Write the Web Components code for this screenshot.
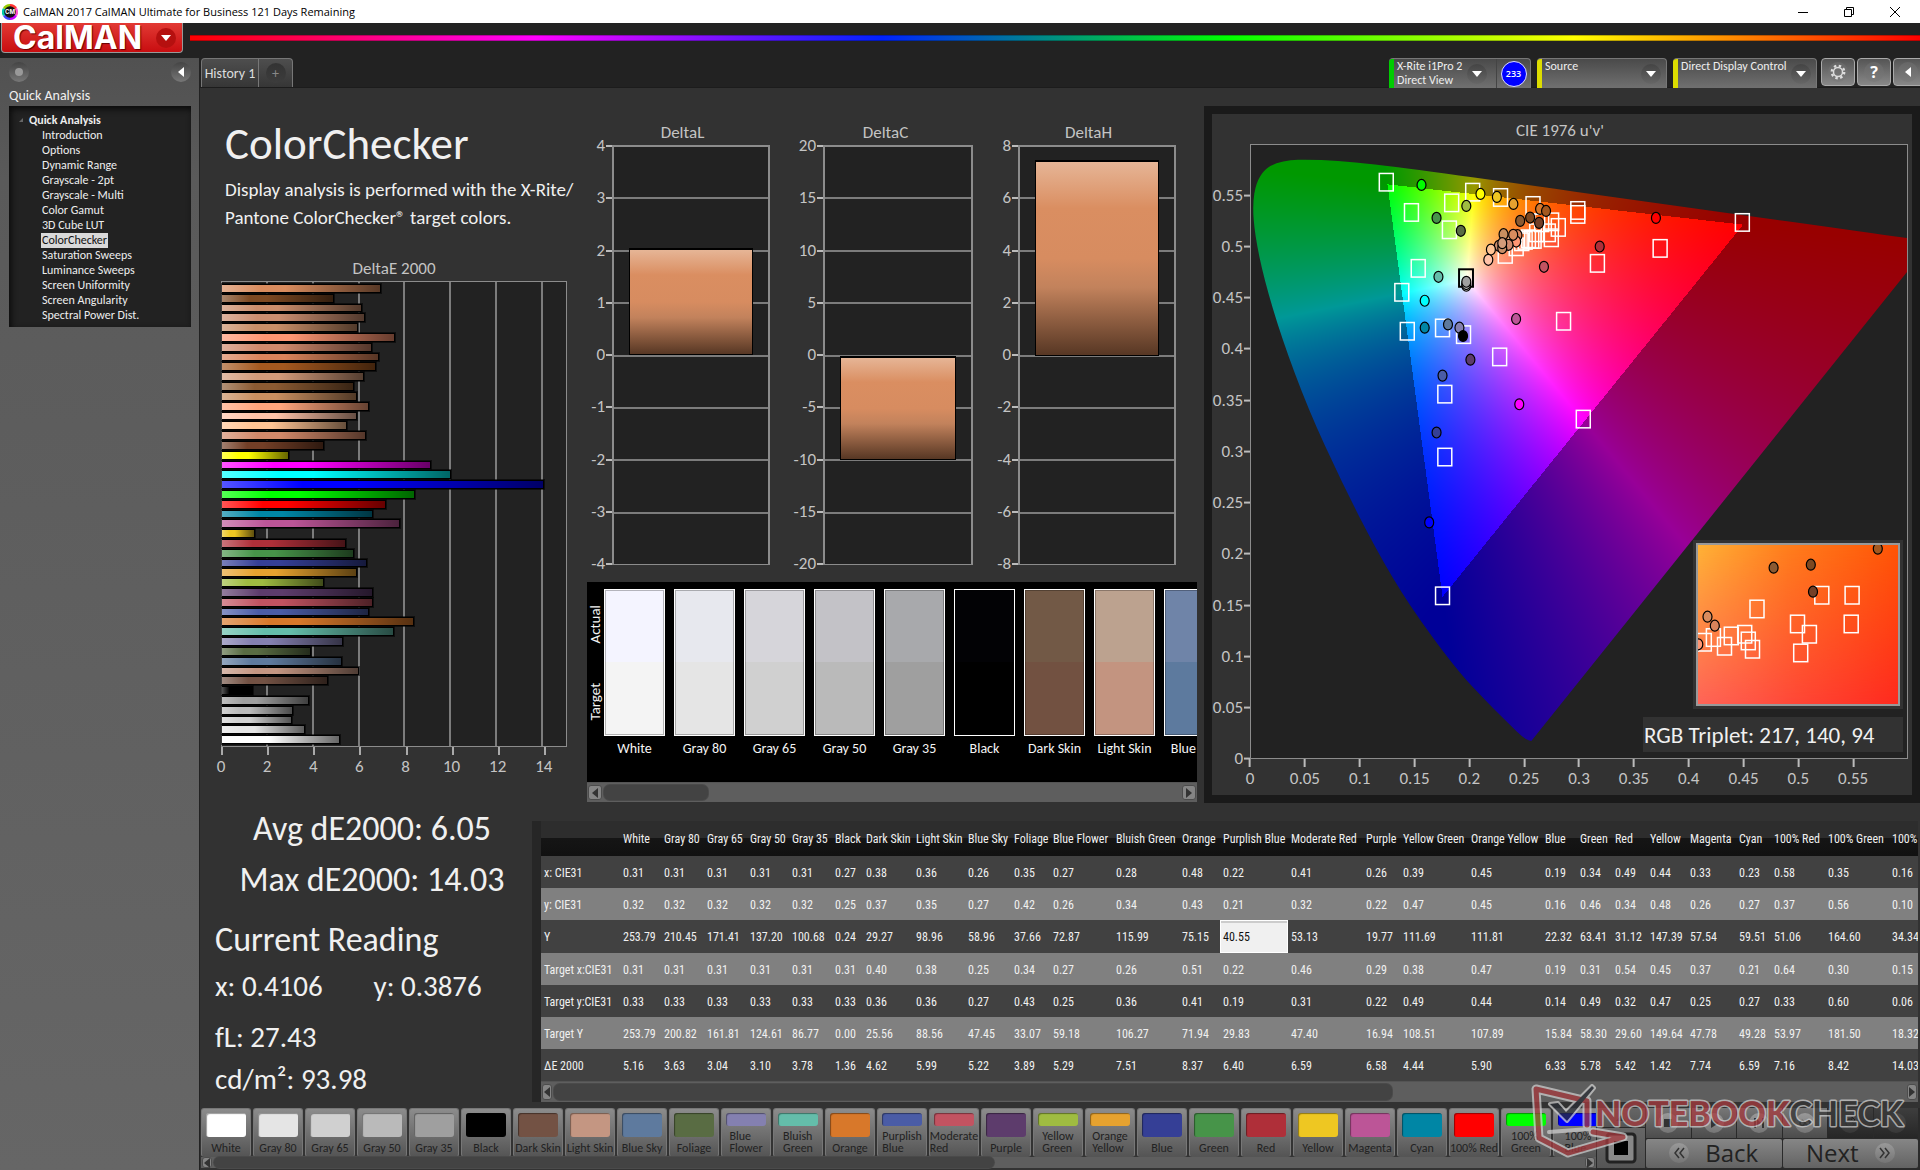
<!DOCTYPE html>
<html lang="en">
<head>
<meta charset="utf-8">
<title>CalMAN 2017 CalMAN Ultimate for Business 121 Days Remaining</title>
<style>
html,body{margin:0;height:100%}
body{background:#323232;color:#e6e6e6;font-family:Carlito,Lato,"Open Sans",sans-serif;overflow:hidden}
</style>
</head>
<body>
<cal-app></cal-app>
<script>
const RESET = `*{box-sizing:border-box}button{font:inherit;color:inherit;border:0;padding:0;margin:0;background:none;cursor:pointer}h1,h2,h3,p,ul,ol,dl,dd,figure{margin:0;padding:0}ul{list-style:none}a{color:inherit;text-decoration:none}svg{display:block}`;

function define(name, css, html, setup) {
  customElements.define(name, class extends HTMLElement {
    connectedCallback() {
      if (this.shadowRoot) return;
      const root = this.attachShadow({ mode: 'open' });
      const tpl = document.createElement('template');
      tpl.innerHTML = `<style>${RESET}${css}</style>${typeof html === 'function' ? html(this) : html}`;
      root.append(tpl.content.cloneNode(true));
      if (setup) setup(this, root);
    }
  });
}

/* ---------- data ---------- */
const PATCHES = [
  ['White','#ffffff',41,'0.31','0.32','253.79','0.31','0.33','253.79','5.16'],
  ['Gray 80','#e5e5e5',43,'0.31','0.32','210.45','0.31','0.33','200.82','3.63'],
  ['Gray 65','#d0d0d0',43,'0.31','0.32','171.41','0.31','0.33','161.81','3.04'],
  ['Gray 50','#bababa',42,'0.31','0.32','137.20','0.31','0.33','124.61','3.10'],
  ['Gray 35','#9f9f9f',43,'0.31','0.32','100.68','0.31','0.33','86.77','3.78'],
  ['Black','#000000',31,'0.27','0.25','0.24','0.31','0.33','0.00','1.36'],
  ['Dark Skin','#735244',50,'0.38','0.37','29.27','0.40','0.36','25.56','4.62'],
  ['Light Skin','#c49682',52,'0.36','0.35','98.96','0.38','0.36','88.56','5.99'],
  ['Blue Sky','#5e7a9e',46,'0.26','0.27','58.96','0.25','0.27','47.45','5.22'],
  ['Foliage','#596c43',39,'0.35','0.42','37.66','0.34','0.43','33.07','3.89'],
  ['Blue Flower','#8480b0',63,'0.27','0.26','72.87','0.27','0.25','59.18','5.29'],
  ['Bluish Green','#64bdaa',66,'0.28','0.34','115.99','0.26','0.36','106.27','7.51'],
  ['Orange','#d8782a',41,'0.48','0.43','75.15','0.51','0.41','71.94','8.37'],
  ['Purplish Blue','#4a5ca6',68,'0.22','0.21','40.55','0.22','0.19','29.83','6.40'],
  ['Moderate Red','#c25361',75,'0.41','0.32','53.13','0.46','0.31','47.40','6.59'],
  ['Purple','#5d3c6c',37,'0.26','0.22','19.77','0.29','0.22','16.94','6.58'],
  ['Yellow Green','#9fbc41',68,'0.39','0.47','111.69','0.38','0.49','108.51','4.44'],
  ['Orange Yellow','#e6a22f',74,'0.45','0.45','111.81','0.47','0.44','107.89','5.90'],
  ['Blue','#353f96',35,'0.19','0.16','22.32','0.19','0.14','15.84','6.33'],
  ['Green','#479449',35,'0.34','0.46','63.41','0.31','0.49','58.30','5.78'],
  ['Red','#af2f39',35,'0.49','0.34','31.12','0.54','0.32','29.60','5.42'],
  ['Yellow','#eec722',40,'0.44','0.48','147.39','0.45','0.47','149.64','1.42'],
  ['Magenta','#bc5597',49,'0.33','0.26','57.54','0.37','0.25','47.78','7.74'],
  ['Cyan','#0086a5',35,'0.23','0.27','59.51','0.21','0.27','49.28','6.59'],
  ['100% Red','#ff0000',54,'0.58','0.37','51.06','0.64','0.33','53.97','7.16'],
  ['100% Green','#00ff00',64,'0.35','0.56','164.60','0.30','0.60','181.50','8.42'],
  ['100% Blue','#0000ff',60,'0.16','0.10','34.34','0.15','0.06','18.32','14.03']
];
const ROWS = ['x: CIE31','y: CIE31','Y','Target x:CIE31','Target y:CIE31','Target Y','ΔE 2000'];
const EXTRA_BARS = [
  [6.92,'#d98c5e'],[4.88,'#7d4922'],[6.11,'#cc8e6c'],[6.24,'#cb8e70'],[5.92,'#c98f68'],[7.55,'#ff9673'],
  [6.55,'#d0896c'],[6.85,'#da845b'],[6.72,'#a4581f'],[6.18,'#d39b7a'],[5.75,'#8b5a32'],[5.88,'#c98f60'],
  [6.42,'#ffa57c'],[5.88,'#ffc3a8'],[5.44,'#ffc494'],[6.28,'#d2896a'],[4.46,'#733f27'],[2.93,'#ffff00'],
  [9.11,'#ff00ff'],[9.97,'#00ffff']
];

/* ---------- small parts ---------- */
define('cal-scroll', `
:host{display:flex;align-items:stretch;background:#5e5e5e;height:20px;padding:2px 1px;border-top:1px solid #545454}
button{flex:none;width:var(--btn,14px);background:#858585;border:1px solid #4c4c4c;border-radius:3px;display:grid;place-items:center}
.track{flex:1;display:flex;margin:0 2px}
.thumb{background:#434343;border-radius:6px;box-shadow:0 0 0 1px #4a4a4a}
`, el => `<button aria-label="Scroll left"><svg width="6" height="10" viewBox="0 0 6 10"><path d="M6 0v10L0 5z" fill="#333"/></svg></button>
<div class="track"><div class="thumb" style="width:${el.getAttribute('thumb')}%"></div></div>
<button aria-label="Scroll right"><svg width="6" height="10" viewBox="0 0 6 10"><path d="M0 0v10l6-5z" fill="#333"/></svg></button>`);

define('cal-round', `
:host{display:grid;place-items:center;width:20px;height:20px;border-radius:50%;background:linear-gradient(var(--a,#444),var(--b,#777))}
`, `<slot></slot>`);

/* ---------- window chrome ---------- */
define('cal-titlebar', `
:host{display:flex;align-items:center;height:23px;background:#fff;color:#000;font:12px "Open Sans","Noto Sans",sans-serif;padding:0 2px}
.t{margin-left:5px;flex:1;font-size:11px}
button{width:46px;height:23px;display:grid;place-items:center}
.w{display:flex}
`, `<svg width="16" height="16" viewBox="0 0 16 16" aria-hidden="true"><path d="M8 8V0a8 8 0 0 1 7 4z" fill="#f33"/><path d="M8 8l7-4a8 8 0 0 1 0 8z" fill="#f5c"/><path d="M8 8l7 4a8 8 0 0 1-7 4z" fill="#c0f"/><path d="M8 8v8a8 8 0 0 1-7-4z" fill="#44f"/><path d="M8 8l-7 4a8 8 0 0 1 0-8z" fill="#0ca"/><path d="M8 8L1 4a8 8 0 0 1 7-4z" fill="#9c0"/><circle cx="8" cy="8" r="5.8" fill="#111"/><text x="8" y="10" font-size="6" font-weight="700" font-family="Inter" text-anchor="middle" fill="#fff">CM</text></svg>
<span class="t">CalMAN 2017 CalMAN Ultimate for Business 121 Days Remaining</span>
<div class="w"><button aria-label="Minimize"><svg width="10" height="10"><path d="M0 5.500h10" stroke="#000"/></svg></button>
<button aria-label="Restore"><svg width="10" height="10" fill="none" stroke="#000"><path d="M.5 2.500h7v7h-7zM2.500 2.500v-2h7v7h-2"/></svg></button>
<button aria-label="Close"><svg width="10" height="10" stroke="#000"><path d="M0 0l10 10M10 0L0 10"/></svg></button></div>`);

define('cal-header', `
:host{display:flex;height:35px;background:#222}
.logo{width:182px;height:30px;margin-left:1px;display:flex;align-items:center;justify-content:space-between;background:linear-gradient(#e23a34,#c80d10);border:1px solid #999;border-top:0;border-radius:0 0 4px 4px;padding:0 6px 0 11px}
.name{font:700 32px/28px Inter,sans-serif;color:#fff;text-shadow:1px 1px 1px #600}
.arrow{width:20px;height:20px;border-radius:50%;background:#b5100f;display:grid;place-items:center}
.bar{flex:1;height:6px;margin:12px 0 0 7px;border:1px solid #0004;border-width:1px 0;background:linear-gradient(90deg,#f00,#f0f 20%,#02f 40%,#0f0 60%,#ff0 80%,#f00)}
`, `<button class="logo" aria-label="CalMAN menu"><span class="name">CalMAN</span><span class="arrow"><svg width="10" height="6"><path d="M0 0h10L5 6z" fill="#fff"/></svg></span></button><div class="bar"></div>`);

define('cal-sidebar', `
:host{display:flex;flex-direction:column;width:200px;flex:none;background:linear-gradient(#515151,#5a5a5a 120px,#666);padding:0 8px 0 9px;border-right:1px solid #222}
.top{display:flex;justify-content:space-between;padding:4px 0}
cal-round{--a:#444;--b:#777}
h2{font-size:14px;line-height:20px;font-weight:400;color:#f0f0f0}
nav{height:221px;background:#222;box-shadow:inset 2px 3px 6px #0a0a0a;padding:6px 0 7px 21px;font-size:12px;color:#eee}
.head{display:flex;align-items:center;font-weight:700;line-height:16px;margin-left:-11px;gap:6px}
ul{display:flex;flex-direction:column;justify-content:space-between;height:190px;padding-left:12px}
li{line-height:15px;display:flex}
a[aria-current]{background:#d9d9d9;color:#111;padding:0 1px;margin-left:-1px}
`, `<div class="top"><cal-round><svg width="8" height="8"><circle cx="4" cy="4" r="4" fill="#999"/></svg></cal-round><button aria-label="Collapse"><cal-round><svg width="6" height="10"><path d="M6 0v10L0 5z" fill="#fff"/></svg></cal-round></button></div>
<h2>Quick Analysis</h2>
<nav aria-label="Quick Analysis"><div class="head"><svg width="4" height="4"><path d="M4 0v4H0z" fill="#666"/></svg>Quick Analysis</div>
<ul>${['Introduction','Options','Dynamic Range','Grayscale - 2pt','Grayscale - Multi','Color Gamut','3D Cube LUT','ColorChecker','Saturation Sweeps','Luminance Sweeps','Screen Uniformity','Screen Angularity','Spectral Power Dist.'].map(t=>`<li><a href="#"${t==='ColorChecker'?' aria-current="page"':''}>${t}</a></li>`).join('')}</ul></nav>`);

define('cal-device', `
:host{display:flex;height:30px;background:linear-gradient(#4a4a4a,#707070);border:1px solid #777;border-bottom:0;border-radius:4px 4px 0 0;overflow:hidden;color:#eee;border-left:0}
.led{width:5px;background:var(--led)}
button{flex:1;display:flex;align-items:center;justify-content:space-between;text-align:left;font-size:12px;line-height:14px;padding:0 var(--end,5px) 0 3px}
.lbl{align-self:flex-start}
cal-round{--a:#444;--b:#666}
`, el => `<span class="led"></span><button aria-haspopup="menu"><span class="lbl"><slot name="label"></slot></span><cal-round><svg width="10" height="6"><path d="M0 0h10L5 6z" fill="#fff"/></svg></cal-round></button><slot></slot>`);

define('cal-tabs', `
:host{display:flex;height:30px;background:#222;padding-left:1px;justify-content:space-between;border-bottom:1px solid #1c1c1c}
.l,.r{display:flex}
.l button{height:29px;background:linear-gradient(#4e4e4e,#363636);border:1px solid #777;border-bottom:0;color:#ddd;font-size:14px}
.h{width:58px;border-radius:4px 0 0 0}.p{width:34px;border-left:0!important;border-radius:0 4px 0 0;display:grid;place-items:center}
.p cal-round{--a:#333;--b:#3c3c3c;color:#888}
.b{width:34px;height:28px;background:linear-gradient(#555,#888);border:1px solid #aaa;border-radius:4px;display:grid;place-items:center;margin-left:2px;flex:none}
.b cal-round{--a:#666;--b:#7c7c7c;color:#fff;font:700 16px/20px "Open Sans",sans-serif}
.b:first-of-type{margin-left:4px}.b:last-of-type{width:30px;margin-right:-3px;border-radius:4px 0 0 4px}
.m{flex:none;width:34px;border-left:1px solid #444;display:grid;place-items:center}
.m span{width:26px;height:26px;border-radius:50%;background:#00f;border:1px solid #ddf;color:#fff;font:600 9px/24px "Open Sans",sans-serif;text-align:center}
`, `<div class="l" role="tablist"><button class="h" role="tab">History 1</button><button class="p" aria-label="Add history"><cal-round>+</cal-round></button></div>
<div class="r">
<cal-device style="width:142px;--led:#0c0;--end:9px"><span slot="label">X-Rite i1Pro 2<br>Direct View</span><div class="m"><span>233</span></div></cal-device>
<cal-device style="width:130px;margin-left:6px;--led:#dd0"><span slot="label">Source</span></cal-device>
<cal-device style="width:144px;margin-left:6px;--led:#dd0"><span slot="label">Direct Display Control</span></cal-device>
<button class="b" aria-label="Settings"><cal-round><svg width="16" height="16" viewBox="-8 -8 16 16" fill="none" stroke="#ddd"><circle r="4.500" stroke-width="1.500"/><circle r="6.200" stroke-width="2.400" stroke-dasharray="2.400 2.470"/></svg></cal-round></button>
<button class="b" aria-label="Help"><cal-round>?</cal-round></button>
<button class="b" aria-label="Collapse panel"><cal-round><svg width="6" height="10"><path d="M6 0v10L0 5z" fill="#fff"/></svg></cal-round></button>
</div>`);

/* ---------- charts ---------- */
define('deltae-chart', `
:host{display:flex;flex-direction:column;color:#c4c4c4;font-size:17px;line-height:20px}
h3{font-size:17px;font-weight:400;text-align:center;margin-bottom:2px}
.plot{flex:1;display:grid;grid-auto-rows:1fr;row-gap:1px;padding:2px 0;border:1px solid #8c8c8c;background:#222 repeating-linear-gradient(90deg,transparent 0 calc(100%/7.5 - 2px),#7c7c7c calc(100%/7.5 - 2px) calc(100%/7.5));min-height:0}
.bar{border:1px solid #000;border-left:0;background-image:linear-gradient(90deg,#fff5,#fff0 25%,#0000 40%,#0009);box-shadow:0 0 0 1px #0008}
.ticks{display:flex;height:8px}.ticks i{flex:0 0 calc(100%/7.5);border-left:2px solid #aaa}
.lab{display:flex;transform:translateX(calc(-100%/15));margin-top:2px}.lab span{flex:0 0 calc(100%/7.5);text-align:center}
`, () => {
  const bars = EXTRA_BARS.concat(PATCHES.slice().reverse().map(p => [+p[9], p[1]]));
  return `<h3>DeltaE 2000</h3><div class="plot">${bars.map(b=>`<div class="bar" style="width:${(b[0]/15*100).toFixed(1)}%;background-color:${b[1]}"></div>`).join('')}</div>
<div class="ticks">${'<i></i>'.repeat(8)}</div><div class="lab">${[0,2,4,6,8,10,12,14].map(n=>`<span>${n}</span>`).join('')}</div>`;
});

define('delta-chart', `
:host{display:flex;flex-direction:column;color:#c4c4c4;font-size:17px;line-height:20px}
h3{font-size:17px;font-weight:400;text-align:center;margin-bottom:2px;padding-left:8px}
.body{flex:1;display:flex}
.axis{width:var(--axis);display:flex;flex-direction:column;justify-content:space-between;margin:-9px 0;text-align:right}
.axis span{display:flex;align-items:center;justify-content:flex-end}
.axis span::after{content:"";width:6px;height:2px;background:#bbb;margin-left:1px}
.plot{flex:1;position:relative;background:#222;display:flex;flex-direction:column;border:1px solid #8c8c8c;border-width:2px 2px 1px}
.plot i{flex:1;border-bottom:2px solid #7c7c7c}.plot i:last-of-type{border:0}
.bar{position:absolute;left:10%;right:10%;border:1px solid #000;border-top-width:2px;background:linear-gradient(#e6b596,#da8e61 24%,#d78c60 50%,#c2825c 65%,#573724)}
`, el => {
  const max = +el.getAttribute('max'), v = +el.getAttribute('value');
  const top = (max - Math.max(v,0)) / (2*max) * 100, h = Math.abs(v) / (2*max) * 100;
  return `<h3>${el.getAttribute('name')}</h3><div class="body"><div class="axis">${[4,3,2,1,0,-1,-2,-3,-4].map(k=>`<span>${k*max/4}</span>`).join('')}</div>
<div class="plot">${'<i></i>'.repeat(8)}<div class="bar" style="top:${top}%;height:${h}%"></div></div></div>`;
});

define('patch-strip', `
:host{display:flex;flex-direction:column;height:220px;background:#000;color:#f4f4f4}
.row{flex:1;display:flex;overflow:hidden}
.side{width:17px;flex:none;display:flex;flex-direction:column;height:158px;padding-top:3px}
.side span{flex:1;writing-mode:vertical-rl;transform:rotate(180deg);text-align:center;font-size:15px;line-height:17px}
ul{display:flex;gap:9px;padding-top:7px}
li{flex:none;width:61px;font-size:14px;line-height:18px;text-align:center;white-space:nowrap}
.sw{display:block;height:147px;border:1px solid #fff;box-shadow:inset 0 0 0 1px #0004;margin-bottom:4px}
`, () => {
  const a = ['#f4f4ff','#e7e8ee','#d6d5da','#c3c2c7','#a8a9ac','#020205','#725946','#bca28f','#6f84a8'];
  const t = ['#f4f4f4','#e5e5e5','#d0d0d0','#bababa','#9f9f9f','#000','#725141','#c39480','#5d7a9e'];
  return `<div class="row"><div class="side"><span>Actual</span><span>Target</span></div><ul>${a.map((c,i)=>`<li><span class="sw" style="background:linear-gradient(${c} 50%,${t[i]} 50%)"></span>${PATCHES[i][0]}</li>`).join('')}</ul></div><cal-scroll thumb="18"></cal-scroll>`;
});

/* CIE 1976 u'v' diagram: spectral locus and Rec.709 triangle */
const LOCUS = [[.1741,.005],[.1714,.0051],[.1644,.0109],[.1566,.0177],[.144,.0297],[.1241,.0578],[.1096,.0868],[.0913,.1327],[.0687,.2007],[.0454,.295],[.0235,.4127],[.0082,.5384],[.0039,.6548],[.0139,.7502],[.0389,.812],[.0743,.8338],[.1142,.8262],[.1547,.8059],[.2296,.7543],[.3016,.6923],[.3731,.6245],[.4441,.5547],[.5125,.4866],[.5752,.4242],[.627,.3725],[.6658,.334],[.6915,.3083],[.719,.2809],[.7347,.2653]];

function paintGamut(canvas) {
  const w = canvas.clientWidth, h = canvas.clientHeight;
  if (!w || !h) return;
  canvas.width = w; canvas.height = h;
  const off = document.createElement('canvas'); off.width = w; off.height = h;
  const oc = off.getContext('2d'), img = oc.createImageData(w, h), d = img.data;
  for (let j = 0, k = 0; j < h; j++) for (let i = 0; i < w; i++, k += 4) {
    const u = (i + .5) / w * .601, v = Math.max(.0005, .601 * (1 - (j + .5) / h));
    const X = 9*u/(4*v), Z = (12 - 3*u - 20*v)/(4*v);
    const r = 3.2406*X - 1.5372 - .4986*Z, g = -.9689*X + 1.8758 + .0415*Z, b = .0557*X - .204 + 1.057*Z;
    const m = Math.max(r, g, b), dim = Math.min(r, g, b) < 0 ? .595 : 1;
    d[k]   = 255*dim*Math.max(r,0)/m;
    d[k+1] = 255*dim*Math.max(g,0)/m;
    d[k+2] = 255*dim*Math.max(b,0)/m;
    d[k+3] = 255;
  }
  oc.putImageData(img, 0, 0);
  const c = canvas.getContext('2d');
  const pts = LOCUS.map(([x,y]) => { const q = -2*x + 12*y + 3; return [4*x/q/.601*w, h - 9*y/q/.601*h]; });
  c.beginPath(); c.moveTo(...pts[0]);
  for (let i = 1; i < pts.length - 1; i++) c.quadraticCurveTo(...pts[i], (pts[i][0]+pts[i+1][0])/2, (pts[i][1]+pts[i+1][1])/2);
  c.lineTo(...pts[pts.length-1]); c.closePath(); c.clip();
  c.drawImage(off, 0, 0);
}

const box = ([x,y]) => `<rect x="${x-7}" y="${y-8.5}" width="14" height="17.500" fill="none" stroke="#fff" stroke-width="1.500"/>`;
const dot = ([x,y,c]) => `<ellipse cx="${x}" cy="${y}" rx="4.500" ry="5.500" fill="${c}" stroke="#000" stroke-width="1.200"/>`;
const TARGETS = [[135.9,37],[161.2,67.3],[201.6,57.7],[222.7,47],[250.7,52.3],[283.3,60.3],[199.3,84.7],[328.3,65.3],[328.3,69.3],[493.6,77.3],[411,103.3],[348,118.3],[168,123.3],[151.5,147.3],[157,186.3],[192.4,183],[213.5,189.7],[249.8,212],[314,176.3],[194.7,249.3],[333.8,274.3],[194.7,312.3],[192.4,451.3],
[255.4,109.3],[266.4,101.7],[272,96.7],[275.4,95.3],[278.7,93.7],[282,94.3],[284.4,94.3],[287,87.7],[292,77.7],[301.7,92.7],[298.7,87.7],[302,76.7],[308.7,82.3]];
const MEASURED = [[171.3,40,'#0f0'],[230.5,49,'#ff0'],[247,52,'#eec722'],[263.6,59,'#e6a22f'],[216.3,61,'#9fbc41'],[186.4,73,'#479449'],[210.8,86,'#596c43'],[406.8,73,'#f00'],[350.3,101.7,'#af2f39'],[294.3,122,'#c25361'],[188.3,132,'#64bdaa'],[174.5,156,'#0ff'],[174.5,183,'#0086a5'],[197.9,179.7,'#5e7a9e'],[209.4,183,'#8480b0'],[213,191.3,'#000'],[266.3,174.3,'#bc5597'],[220.4,215,'#5d3c6c'],[192.4,231,'#4a5ca6'],[269.5,259.7,'#f0f'],[186.4,288,'#353f96'],[179,378,'#00f'],[216.3,141,'#ddd'],[216.3,139.3,'#bababa'],[216.3,137,'#a0a0a0'],
[270.4,76,'#8b5a32'],[280.4,72.7,'#7d4922'],[289.4,78,'#733f27'],[290.4,64,'#d8782a'],[296.4,66,'#a4581f'],[253.7,89.3,'#c98f60'],[267.7,90.3,'#da845b'],[266.4,96.7,'#ff9673'],[263.4,90,'#d98c5e'],[258.7,100,'#d0896c'],[249,101,'#cc8e6c'],[252.4,103.3,'#c98f68'],[252.4,98.3,'#d39b7a'],[241,104.7,'#ffc494'],[238.4,115,'#ffc3a8']];
const IN_T = [[61,65.7],[125.8,52],[156.1,52],[155.2,80.7],[101.5,80.7],[113.4,91],[104.7,109.7],[8.3,99],[17.4,94.3],[28.5,103],[35.3,92.7],[48.7,91],[52.3,97.7],[56.5,106]];
const IN_M = [[77.6,24.7,'#8b5a32'],[114.8,21.7,'#7d4922'],[117,48.7,'#733f27'],[181.8,5.7,'#a4581f'],[11.5,73.7,'#d98c5e'],[18.8,82.7,'#da845b'],[2.3,101.3,'#ff9673']];

define('cie-chart', `
:host{display:flex;flex-direction:column;border:8px solid #1a1a1a;background:#323232;color:#c4c4c4;font-size:17px;line-height:20px;padding:7px 4px 6px 0}
h3{font-size:17px;font-weight:400;text-align:center;margin-bottom:3px}
.body{flex:1;display:grid;grid-template:1fr auto/38px 1fr;min-height:0}
.y{display:flex;flex-direction:column;transform:translateY(4.160%)}
.y span{flex:1;display:flex;align-items:center;justify-content:flex-end}
.y span::after{content:"";width:6px;height:2px;background:#bbb;margin-left:1px}
.plot{position:relative;background:#222;border:1px solid #8c8c8c;overflow:hidden}
canvas,.marks{position:absolute;inset:0;width:100%;height:100%}
.x{grid-column:2;display:flex;transform:translateX(-4.160%)}
.x span{flex:1;display:flex;flex-direction:column;align-items:center}
.x span::before{content:"";width:2px;height:8px;background:#bbb;margin-bottom:2px}
.inset{position:absolute;right:4px;bottom:49px;padding:3px;background:#323232;width:210px;height:169px}
.zoom{width:100%;height:100%;border:2px solid #999;background:linear-gradient(90deg,#ffb236,#ff7e1c 45%,#ff5506)}
.shade{position:absolute;inset:5px;background:linear-gradient(90deg,#ff6458,#ff4636 50%,#ff2a1e);-webkit-mask:linear-gradient(#0000,#000);mask:linear-gradient(#0000,#000)}
.zoom svg{position:absolute;inset:5px;overflow:hidden}
.rgb{position:absolute;right:4px;bottom:6px;width:260px;height:35px;background:#323232;color:#f0f0f0;font-size:23px;line-height:36px;white-space:nowrap;padding-left:1px}
`, () => `<h3>CIE 1976 u'v'</h3><div class="body">
<div class="y">${['0.55','0.5','0.45','0.4','0.35','0.3','0.25','0.2','0.15','0.1','0.05','0'].map(t=>`<span>${t}</span>`).join('')}</div>
<div class="plot"><canvas></canvas>
<svg class="marks" viewBox="0 0 659 614" preserveAspectRatio="none">${TARGETS.map(box).join('')}<rect x="209" y="124.500" width="14" height="17.500" fill="none" stroke="#000" stroke-width="2"/>${MEASURED.map(dot).join('')}</svg>
<div class="inset"><div class="zoom"><div class="shade"></div><svg width="200" height="159" viewBox="2 2 200 159">${IN_T.map(box).join('')}${IN_M.map(dot).join('')}</svg></div></div>
<div class="rgb">RGB Triplet: 217, 140, 94</div></div>
<div class="x">${['0','0.05','0.1','0.15','0.2','0.25','0.3','0.35','0.4','0.45','0.5','0.55'].map(t=>`<span>${t}</span>`).join('')}</div></div>`,
(el, root) => {
  const c = root.querySelector('canvas');
  paintGamut(c);
  new ResizeObserver(() => { if (c.width !== c.clientWidth || c.height !== c.clientHeight) paintGamut(c); }).observe(c);
});

/* ---------- lower area ---------- */
define('cal-readings', `
:host{display:block;width:332px;flex:none;padding-left:15px;margin-top:-12px;color:#f0f0f0;font-size:29px;line-height:36px;white-space:nowrap}
.c{font-size:34px;line-height:40px;text-align:center;margin-bottom:11px;padding-right:3px}
h2{font-size:34px;line-height:40px;font-weight:400;margin:20px 0 8px}
.xy{display:flex;margin-bottom:15px}.xy span{width:162px}
p+p.l{margin-top:6px}
`, `<p class="c">Avg dE2000: 6.05</p><p class="c">Max dE2000: 14.03</p><h2>Current Reading</h2>
<p class="xy"><span>x: 0.4106</span><span>y: 0.3876</span></p><p>fL: 27.43</p><p class="l">cd/m²: 93.98</p>`);

define('cal-table', `
:host{display:block;flex:1;min-width:0;overflow:hidden;border-left:9px solid #262626;margin-right:2px}
.wrap{overflow:hidden;height:260px}
table{border-collapse:collapse;table-layout:fixed;width:1400px;font:12px "Roboto Condensed",Carlito,sans-serif;color:#f0f0f0}
th,td{padding:1px 0 0 3px;text-align:left;font-weight:400;white-space:nowrap;overflow:visible;height:32px}
thead th{height:35px;background:linear-gradient(#2d2d2d 50%,#151515 50%,#111)}
tbody tr{background:#414141}tbody tr:nth-child(even){background:#808080}
tbody tr:nth-child(3) td,tbody tr:nth-child(3) th{height:33px}
td.sel{background:#f0f0f0;color:#111;box-shadow:inset 0 0 0 1px #fff,inset 0 2px 0 1px #ccc}
cal-scroll{height:21px;--btn:10px}
`, () => `<div class="wrap"><table><colgroup><col style="width:79px">${PATCHES.map(p=>`<col style="width:${p[2]}px">`).join('')}</colgroup>
<thead><tr><th></th>${PATCHES.map(p=>`<th scope="col">${p[0]}</th>`).join('')}</tr></thead>
<tbody>${ROWS.map((r,i)=>`<tr><th scope="row">${r}</th>${PATCHES.map((p,j)=>`<td${i===2&&j===13?' class="sel"':''}>${p[i+3]}</td>`).join('')}</tr>`).join('')}</tbody></table></div><cal-scroll thumb="62"></cal-scroll>`);

define('patch-bar', `
:host{display:flex;flex-direction:column;flex:1;min-width:0;height:62px;background:#333;padding-left:1px}
.row{display:flex;gap:2px;overflow:hidden;height:49px}
button{flex:none;width:50px;height:49px;background:linear-gradient(#8c8c8c,#555);border:1px solid #777;border-bottom-color:#555;border-radius:3px;display:flex;flex-direction:column;align-items:center;padding-top:4px;color:#222;font-size:12px;line-height:12px;white-space:nowrap}
.sw{width:40px;flex:1;border-radius:3px;box-shadow:inset 1px 1px 1px #0006}
.t{margin:5px 0 2px;text-align:left}
.two .t{margin-top:4px}
cal-scroll{height:11px;padding:0 1px;--btn:10px;border:0}
`, () => `<div class="row">${PATCHES.map(p => {
  const two = /^(Blue Flower|Bluish|Purplish|Moderate|Yellow Green|Orange Yellow|100% (G|B))/.test(p[0]);
  return `<button class="${two?'two':''}"><span class="sw" style="background:${p[1]}"></span><span class="t">${two?p[0].replace(' ','<br>'):p[0]}</span></button>`;
}).join('')}</div><cal-scroll thumb="57"></cal-scroll>`);

define('cal-transport', `
:host{display:flex;width:324px;flex:none;height:62px;background:#2a2a2a;gap:1px;padding:0 2px 2px 1px}
.mon{width:48px;display:flex;flex-direction:column;gap:1px}
.mon button{background:linear-gradient(#666,#555);display:grid;place-items:center}
.mon .u{height:19px}.mon .d{flex:1}
.right{flex:1;display:flex;flex-direction:column;gap:1px}
.r{display:flex;gap:1px;flex:1}
.r button{flex:1;background:linear-gradient(#777,#4c4c4c);display:flex;align-items:center;justify-content:center;gap:16px;color:#222;font:24px/28px "Open Sans",sans-serif}
.r .off{background:linear-gradient(#3e3e3e,#262626)}
.r.big button{background:linear-gradient(#868686,#636363);border-radius:2px}
cal-round{--a:#999;--b:#757575}
.off cal-round{--a:#484848;--b:#383838}
`, () => {
  const ic = d => `<cal-round><svg width="12" height="12" viewBox="0 0 12 12" fill="#333">${d}</svg></cal-round>`;
  return `<div class="mon"><button class="u" aria-label="Expand"><svg width="10" height="6"><path d="M0 6h10L5 0z" fill="#333"/></svg></button>
<button class="d" aria-label="Pattern window"><svg width="32" height="32" viewBox="0 0 32 32"><rect x="2" y="2" width="28" height="28" rx="3" fill="#888" stroke="#222" stroke-width="3"/><rect x="9" y="9" width="14" height="14"/></svg></button></div>
<div class="right"><div class="r">
<button aria-label="Stop">${ic('<path d="M2 2h8v8H2z"/>')}</button><button aria-label="Play">${ic('<path d="M3 1l8 5-8 5z"/>')}</button>
<button aria-label="Play series">${ic('<path d="M1 1h2v10H1zM4 2l4 4-4 4zM9 1h2v10H9z"/>')}</button><button aria-label="Continuous">${ic('<path d="M3.500 3.500a2.500 2.500 0 1 0 0 5c2 0 3-5 5-5a2.500 2.500 0 1 1 0 5c-2 0-3-5-5-5z" fill="none" stroke="#333" stroke-width="1.500"/>')}</button>
<button class="off" aria-label="Refresh">${ic('<path d="M10 6a4 4 0 1 1-2-3.500V0l3 3-3 3" fill="none" stroke="#222"/>')}</button><button class="off" aria-label="Record">${ic('')}</button></div>
<div class="r big"><button>${ic('<path d="M6 1L2 6l4 5M11 1L7 6l4 5" fill="none" stroke="#333" stroke-width="1.500"/>')}Back</button><button>Next${ic('<path d="M1 1l4 5-4 5M6 1l4 5-4 5" fill="none" stroke="#333" stroke-width="1.500"/>')}</button></div></div>`;
});

define('cal-watermark', `
:host{position:absolute;right:10px;bottom:5px;width:390px;height:90px;pointer-events:none;opacity:.75}
`, `<svg width="390" height="90" viewBox="0 0 390 90" fill="none" stroke-linejoin="round" stroke-linecap="round" style="overflow:visible">
<path d="M67 50V26L16 14L19 63L48 78L103 62L73 57" stroke="#ccc" stroke-width="9"/>
<path d="M30 29l8-1 8 9 26-26 2 2-27 33zM29 57l40-3" stroke="#ccc" stroke-width="4"/>
<path d="M67 50V26L16 14L19 63L48 78L103 62L73 57" stroke="#a63a3e" stroke-width="5"/>
<path d="M30 29l8-1 8 9 26-26 2 2-27 33z" fill="#2a2e36"/>
<text x="75" y="51" font-family="Lato" font-size="34" font-weight="900" stroke="#ccc" stroke-width="3" paint-order="stroke" fill="#a63a3e">NOTEBOOK<tspan font-weight="700" fill="#383838">CHECK</tspan></text></svg>`);

/* ---------- page ---------- */
define('cal-app', `
:host{display:flex;flex-direction:column;height:100vh;position:relative;overflow:hidden}
.body{flex:1;display:flex;min-height:0}
main{flex:1;min-width:0;display:flex;flex-direction:column}
.upper{flex:1;min-height:0;display:grid;grid-template-columns:366fr 617fr 716fr;padding-left:21px}
.left{display:flex;flex-direction:column;padding:29px 20px 26px 0;min-width:0}
h1{font-size:45px;line-height:54px;font-weight:400;color:#f0f0f0;padding-left:4px}
.left p{font-size:19px;line-height:28px;color:#f0f0f0;margin:5px 0 27px;padding-left:4px;white-space:nowrap}
deltae-chart{flex:1;min-height:0}
.mid{display:flex;flex-direction:column;padding:35px 7px 1px 0;min-width:0}
.deltas{flex:1;display:grid;grid-template-columns:repeat(3,1fr);gap:20px;padding:0 21px 17px 0}
cie-chart{margin-top:18px;min-width:0}
.lower{display:flex;margin-top:18px;height:281px}
footer{display:flex;margin-top:6px}
`, `<cal-titlebar></cal-titlebar><cal-header></cal-header>
<div class="body"><cal-sidebar></cal-sidebar><main><cal-tabs></cal-tabs>
<section class="upper"><div class="left"><h1>ColorChecker</h1><p>Display analysis is performed with the X-Rite/<br>Pantone ColorChecker® target colors.</p><deltae-chart></deltae-chart></div>
<div class="mid"><div class="deltas"><delta-chart name="DeltaL" max="4" value="2.070" style="--axis:25px"></delta-chart><delta-chart name="DeltaC" max="20" value="-10" style="--axis:33px"></delta-chart><delta-chart name="DeltaH" max="8" value="7.500" style="--axis:25px"></delta-chart></div><patch-strip></patch-strip></div>
<cie-chart></cie-chart></section>
<section class="lower"><cal-readings></cal-readings><cal-table></cal-table></section>
<footer><patch-bar></patch-bar><cal-transport></cal-transport></footer></main></div>
<cal-watermark></cal-watermark>`);
</script>
</body>
</html>
